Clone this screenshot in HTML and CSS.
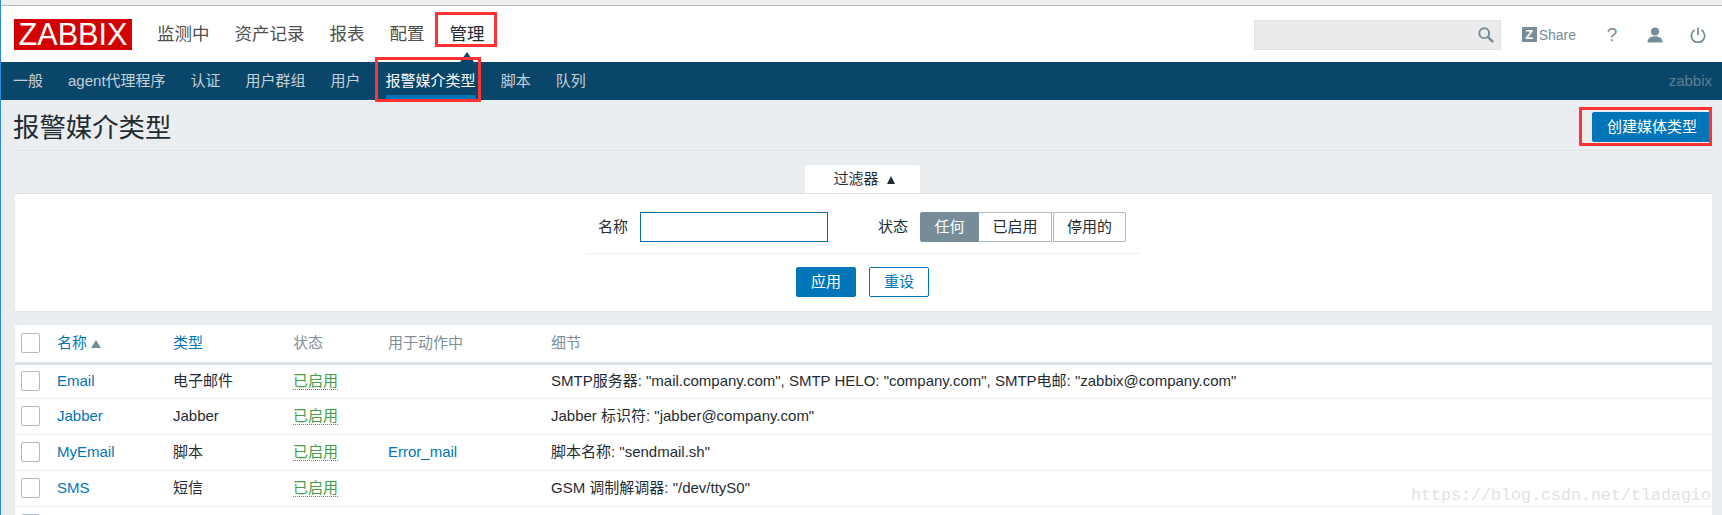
FILE: index.html
```html
<!DOCTYPE html>
<html lang="zh">
<head>
<meta charset="utf-8">
<title>报警媒介类型</title>
<link rel="stylesheet" href="styles.css">
</head>
<body>
<div class="page">
  <div class="chrome"></div>
  <header class="topbar">
    <div class="logo">ZABBIX</div>
    <nav class="mainnav">
      <a>监测中</a><a>资产记录</a><a>报表</a><a>配置</a><a class="current">管理</a>
    </nav>
    <div class="tools">
      <div class="search">
        <svg class="search-icon" width="16" height="16" viewBox="0 0 18 18"><circle cx="7" cy="7" r="5.500" fill="none" stroke="#768d99" stroke-width="2.200"/><path d="M11 11l6 6" stroke="#768d99" stroke-width="2.800"/></svg>
      </div>
      <a class="share"><span class="share-z">Z</span>Share</a>
      <span class="help">?</span>
      <svg class="tool-icon user" width="16" height="16" viewBox="0 0 18 18"><circle cx="9" cy="5" r="4.500" fill="#768d99"/><path d="M0.500 17.500c0-4.500 3.500-7 8.500-7s8.500 2.500 8.500 7z" fill="#768d99"/></svg>
      <svg class="tool-icon power" width="16" height="16" viewBox="0 0 18 18"><path d="M5 3.500a7.500 7.500 0 1 0 8 0" fill="none" stroke="#768d99" stroke-width="2"/><path d="M9 0.500v8.500" stroke="#768d99" stroke-width="2"/></svg>
    </div>
  </header>
  <nav class="subnav">
    <a>一般</a><a>agent代理程序</a><a>认证</a><a>用户群组</a><a>用户</a><a class="active">报警媒介类型</a><a>脚本</a><a>队列</a>
    <span class="server">zabbix</span>
  </nav>
  <main class="content">
    <div class="titlebar">
      <h1>报警媒介类型</h1>
      <button class="btn create">创建媒体类型</button>
    </div>
    <div class="tabrow"><div class="tab">过滤器<span class="tri"></span></div></div>
    <section class="filter">
      <div class="filter-row">
        <label class="lbl">名称</label>
        <input class="name-input" type="text">
        <label class="lbl status-lbl">状态</label>
        <div class="seg">
          <span class="on">任何</span><span class="s2">已启用</span><span class="s3">停用的</span>
        </div>
      </div>
      <div class="filter-actions">
        <button class="btn apply">应用</button>
        <button class="btn reset">重设</button>
      </div>
    </section>
    <table class="list">
      <colgroup><col class="c0"><col class="c1"><col class="c2"><col class="c3"><col class="c4"><col></colgroup>
      <thead>
        <tr>
          <th><span class="cb"></span></th>
          <th><a>名称</a><span class="sort"></span></th>
          <th><a>类型</a></th>
          <th>状态</th>
          <th>用于动作中</th>
          <th>细节</th>
        </tr>
      </thead>
      <tbody>
        <tr><td><span class="cb"></span></td><td><a>Email</a></td><td>电子邮件</td><td><span class="ok">已启用</span></td><td></td><td>SMTP服务器: "mail.company.com", SMTP HELO: "company.com", SMTP电邮: "zabbix@company.com"</td></tr>
        <tr><td><span class="cb"></span></td><td><a>Jabber</a></td><td>Jabber</td><td><span class="ok">已启用</span></td><td></td><td>Jabber 标识符: "jabber@company.com"</td></tr>
        <tr><td><span class="cb"></span></td><td><a>MyEmail</a></td><td>脚本</td><td><span class="ok">已启用</span></td><td><a>Error_mail</a></td><td>脚本名称: "sendmail.sh"</td></tr>
        <tr><td><span class="cb"></span></td><td><a>SMS</a></td><td>短信</td><td><span class="ok">已启用</span></td><td></td><td>GSM 调制解调器: "/dev/ttyS0"</td></tr>
        <tr><td><span class="cb"></span></td><td></td><td></td><td></td><td></td><td></td></tr>
      </tbody>
    </table>
  </main>
  <div class="mark mark-nav"></div>
  <div class="mark mark-sub"></div>
  <div class="mark mark-create"></div>
  <div class="watermark">https://blog.csdn.net/tladagio</div>
</div>
</body>
</html>
```
FILE: styles.css
```css
* { box-sizing: border-box; }
html, body { margin: 0; padding: 0; }
body {
  background: #ebeef0;
  color: #1f2c33;
  font: 15px "Liberation Sans", "Noto Sans CJK SC", sans-serif;
}
.page {
  position: relative;
  width: 1722px;
  height: 515px;
  overflow: hidden;
  border-left: 1px solid #2a8ae0;
}
.chrome { height: 6px; background: #f0f0f0; border-bottom: 1px solid #bbb; }

.topbar {
  height: 56px;
  background: #fff;
  display: flex;
  align-items: flex-start;
  padding: 13px 0 0 13px;
}
.logo {
  width: 118px;
  height: 31px;
  background: #d40000;
  color: #fff;
  font-size: 30.7px;
  line-height: 31px;
  text-align: center;
}
.mainnav { display: flex; gap: 25px; margin-left: 25px; font-size: 17.5px; line-height: 31px; color: #4f4f4f; position: relative; }
.mainnav .current { color: #1f2c33; position: relative; }
.mainnav .current::after {
  content: "";
  position: absolute;
  left: 50%;
  top: 33px;
  margin-left: -7px;
  border: 7px solid transparent;
  border-top: 0;
  border-bottom: 10px solid #0a466a;
}
.tools { display: flex; align-items: center; margin-left: auto; height: 31px; }
.search {
  width: 247px;
  height: 30px;
  background: #ebebeb;
  border: 1px solid #e3e3e3;
  display: flex;
  align-items: center;
  justify-content: flex-end;
  padding-right: 6px;
}
.share { display: flex; align-items: center; margin-left: 21px; font-size: 14px; color: #768d99; }
.share-z {
  width: 15px; height: 15px; margin-right: 2px;
  background: #768d99; color: #fff;
  font-size: 13px; font-weight: bold; line-height: 15px; text-align: center;
}
.help { margin-left: 30px; width: 12px; font-size: 19px; color: #768d99; text-align: center; }
.tool-icon { display: block; }
.user { margin-left: 29px; }
.power { margin-left: 27px; margin-right: 16px; }

.subnav {
  height: 38px;
  background: #0a466a;
  display: flex;
  gap: 25px;
  padding-left: 12px;
  font-size: 15px;
  line-height: 38px;
  color: #c6d1d8;
}
.subnav .active { color: #fff; position: relative; }
.subnav .active::after {
  content: "";
  position: absolute;
  left: 0; right: 0; bottom: 1px;
  height: 4px;
  background: #0275b8;
}
.server { margin-left: auto; margin-right: 10px; color: #5f7f94; }

.content { padding: 0 10px 0 14px; }
.titlebar {
  height: 51px;
  display: flex;
  align-items: flex-start;
  justify-content: space-between;
  border-bottom: 1px solid #dfe4e7;
  padding-top: 12px;
}
h1 { margin: 0 0 0 -2px; padding-top: 1px; font-size: 26.4px; font-weight: normal; line-height: 30px; }
.btn { font: inherit; font-size: 15px; height: 30px; border-radius: 2px; padding: 0 14px; line-height: 28px; cursor: pointer; }
.create, .apply { background: #0275b8; border: 1px solid #0275b8; color: #fff; }
.reset { background: #fff; border: 1px solid #0275b8; color: #0275b8; }

.tabrow { display: flex; justify-content: center; margin-top: 14px; padding-right: 2px; }
.tab {
  width: 115px; height: 28px;
  background: #fff;
  border-radius: 2px 2px 0 0;
  text-align: center;
  font-size: 15px;
  line-height: 28px;
  padding-left: 3px;
}
.tri {
  display: inline-block;
  margin-left: 8px;
  border: 4.5px solid transparent;
  border-top: 0;
  border-bottom: 8px solid #1f2c33;
}
.filter {
  height: 119px;
  background: #fff;
  border-top: 1px solid #dfe4e7;
  border-bottom: 1px solid #dfe4e7;
  display: flex;
  flex-direction: column;
  align-items: center;
  padding-right: 2px;
}
.filter-row {
  width: 553px;
  height: 42px;
  margin-top: 18px;
  padding: 0 0 0 12px;
  display: flex;
  align-items: flex-start;
  border-bottom: 1px solid #ebeef0;
  font-size: 15px;
}
.lbl { line-height: 30px; }
.name-input { width: 188px; height: 30px; margin-left: 12px; border: 1px solid #0f6ea8; background: #fff; padding: 0; }
.status-lbl { margin-left: 50px; }
.seg { display: flex; margin-left: 12px; line-height: 28px; text-align: center; }
.seg span { height: 30px; border: 1px solid #acbbc2; background: #fff; }
.seg .on { width: 59px; background: #768d99; border-color: #768d99; color: #fff; border-radius: 2px 0 0 2px; }
.seg .s2 { width: 73px; border-left: 0; }
.seg .s3 { width: 73px; margin-left: 1px; border-radius: 0 2px 2px 0; }
.filter-actions { display: flex; gap: 13px; margin-top: 13px; }
.filter-actions .btn { width: 60px; padding: 0; }

.list {
  width: 100%;
  margin-top: 13px;
  background: #fff;
  border-collapse: collapse;
  table-layout: fixed;
}
.c0 { width: 42px; }
.c1 { width: 116px; }
.c2 { width: 120px; }
.c3 { width: 95px; }
.c4 { width: 163px; }
.list a { color: #0275b8; }
.list th {
  height: 38px;
  padding: 0;
  text-align: left;
  font-weight: normal;
  line-height: 20px;
  color: #7d8f99;
  border-bottom: 3px solid #dce2e6;
}
.list td { height: 36px; padding: 0; line-height: 20px; border-bottom: 1px solid #ebeef0; }
.list tbody tr:first-child td { height: 35px; }
.list th:first-child, .list td:first-child { padding-left: 6px; }
.cb {
  display: block;
  width: 19px; height: 20px;
  border: 1px solid #acbbc2;
  border-radius: 2px;
  background: #fff;
}
.sort {
  display: inline-block;
  margin-left: 4px;
  border: 5px solid transparent;
  border-top: 0;
  border-bottom: 8px solid #768d99;
}
.ok { color: #429e47; border-bottom: 1px dotted #429e47; }

.mark { position: absolute; border: 3px solid #f33; }
.mark-nav { left: 434px; top: 12px; width: 62px; height: 35px; }
.mark-sub { left: 374px; top: 57px; width: 106px; height: 45px; }
.mark-create { left: 1578px; top: 107px; width: 133px; height: 39px; }
.watermark {
  position: absolute;
  left: 1410px;
  top: 486px;
  font: 16.67px/20px "Liberation Mono", monospace;
  color: #e3e3de;
}
```
